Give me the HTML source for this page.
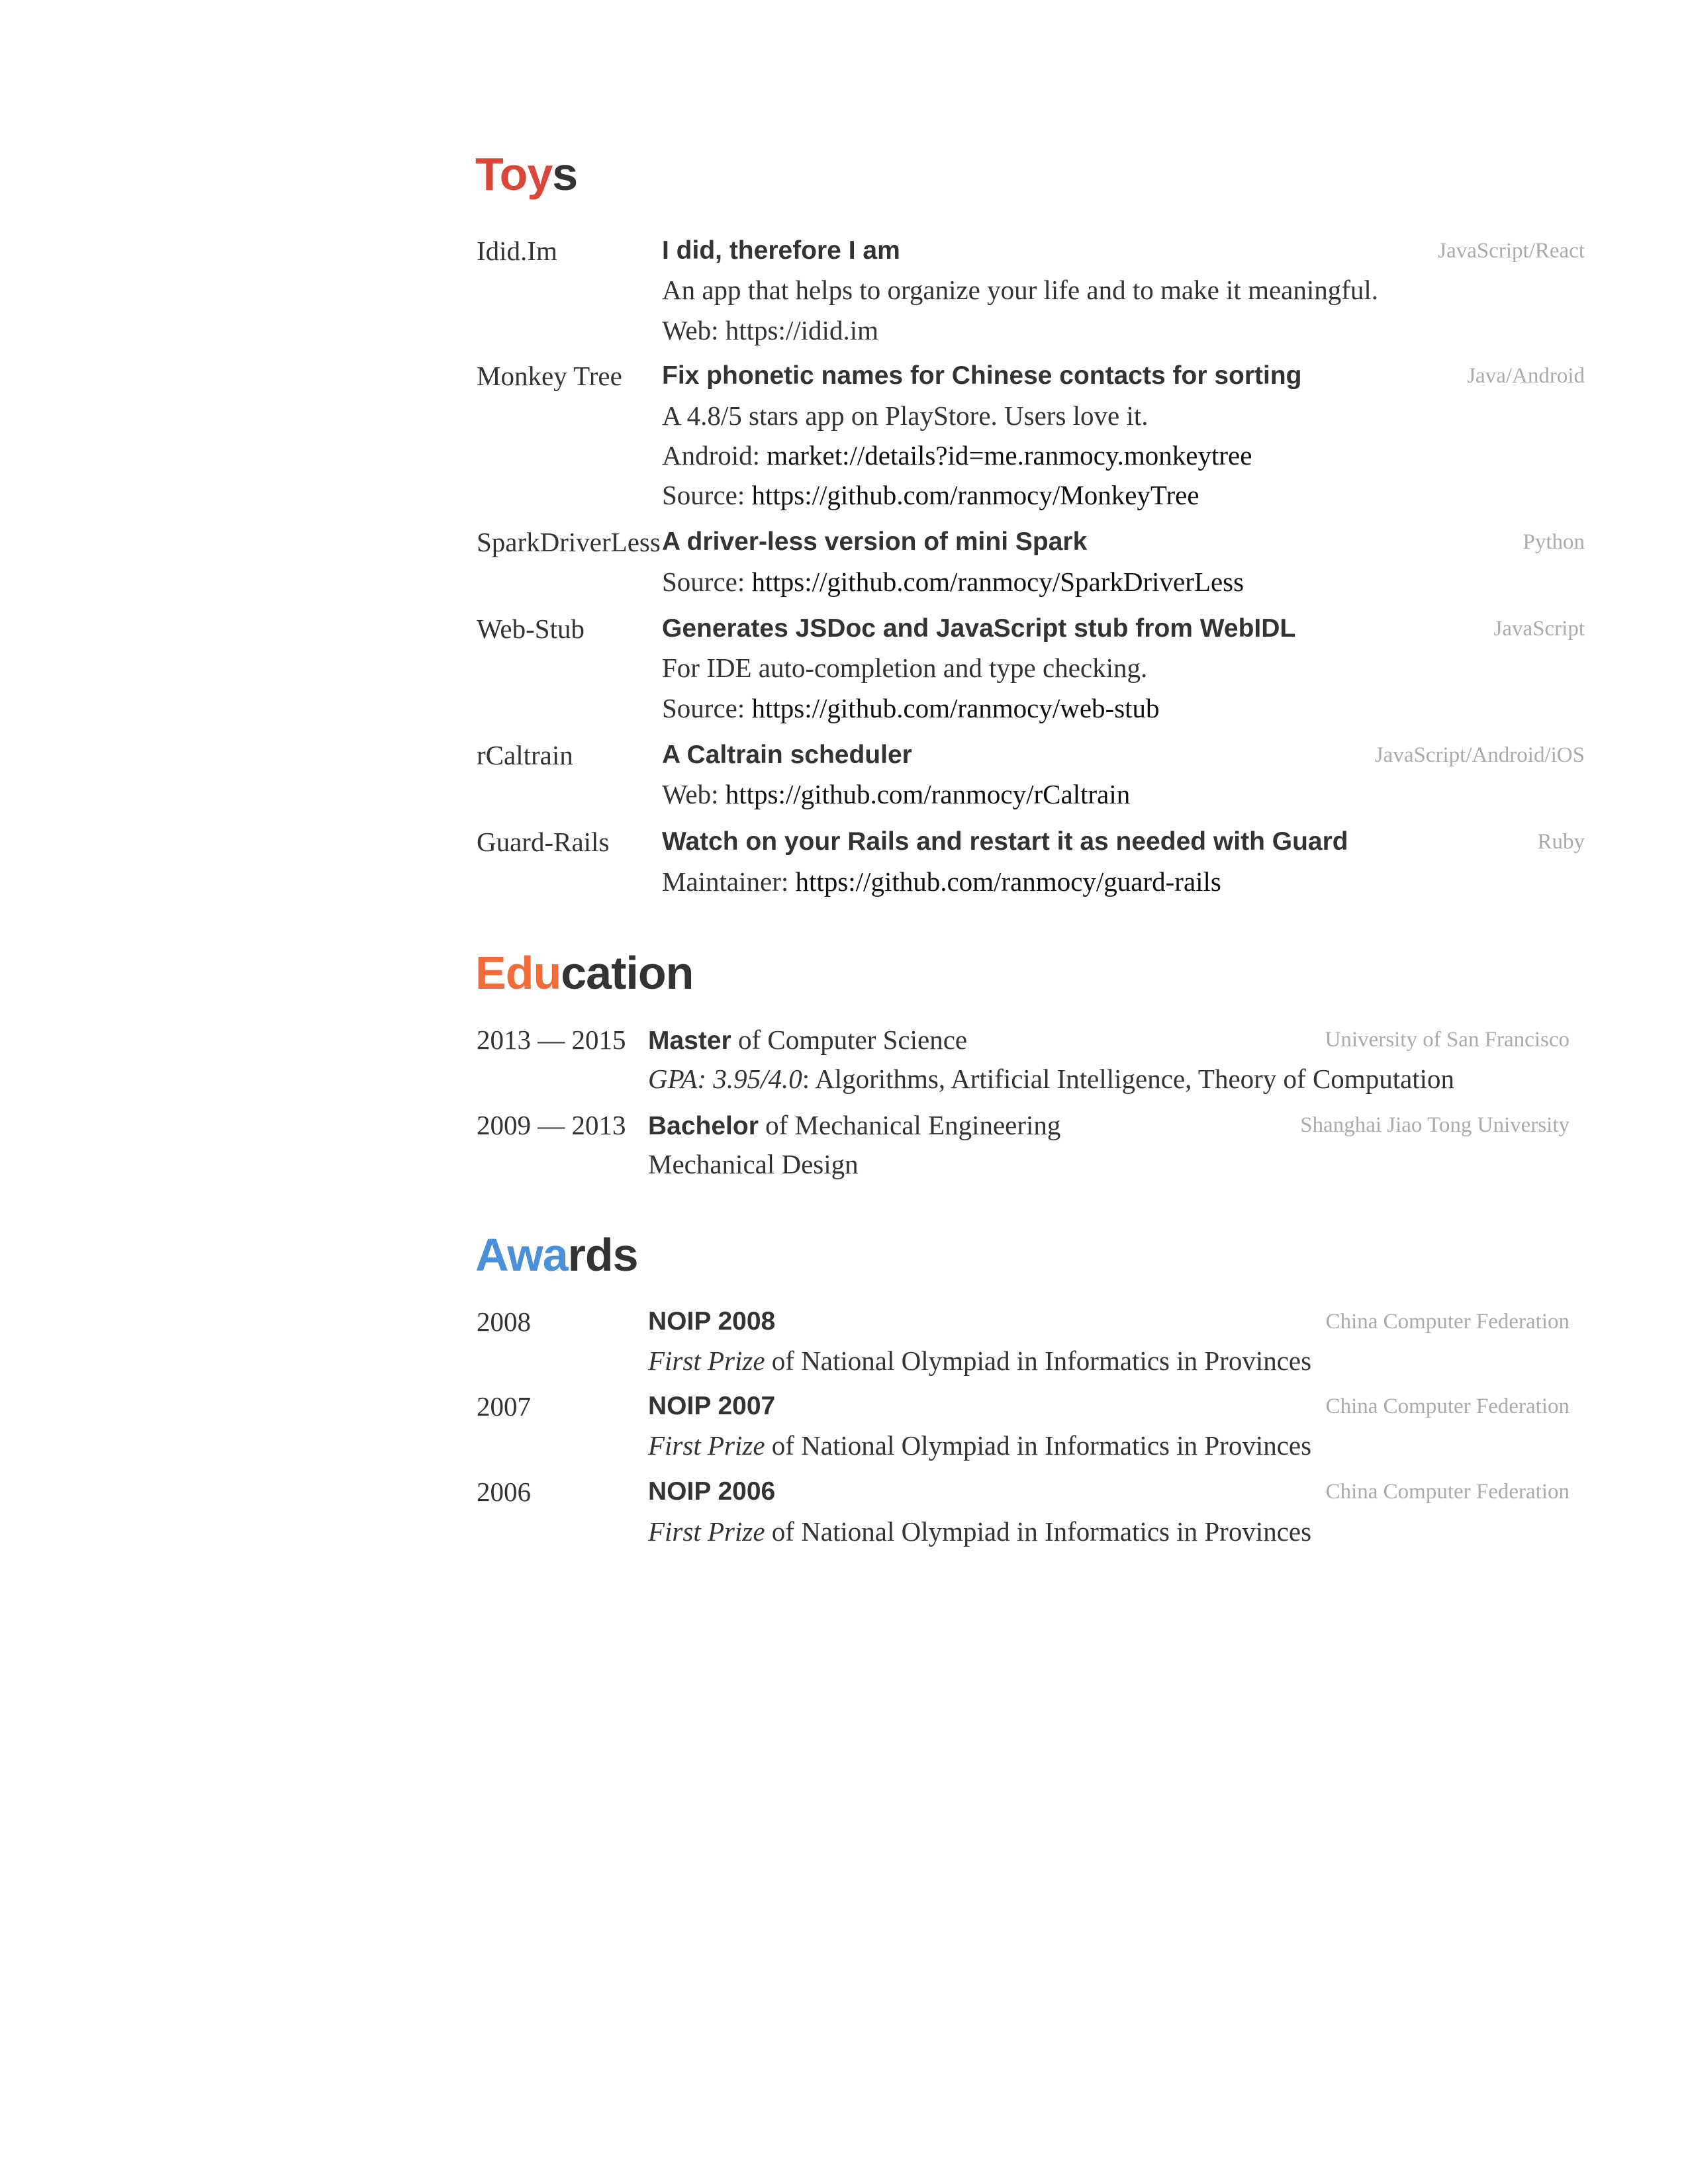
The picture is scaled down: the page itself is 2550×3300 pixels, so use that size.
<!DOCTYPE html>
<html><head><meta charset="utf-8"><style>
html,body{margin:0;padding:0;background:#fff;}
body{width:2550px;height:3300px;position:relative;overflow:hidden;font-family:"Liberation Serif",serif;color:#333;}
.l{position:absolute;height:50px;line-height:50px;font-size:41px;white-space:nowrap;}
.h{position:absolute;height:90px;line-height:90px;font-size:70px;font-weight:bold;font-family:"Liberation Sans",sans-serif;color:#333;left:718px;letter-spacing:-1px;}
.b{font-family:"Liberation Sans",sans-serif;font-weight:bold;font-size:39px;color:#333;}
.t{position:absolute;height:50px;line-height:50px;font-size:33px;color:#aaa;white-space:nowrap;text-align:right;}
.u{color:#111;}
</style></head><body>
<div class="h" style="top:218px"><span style="color:#d9473a">Toy</span>s</div>

<div class="l" style="left:720px;top:354px">Idid.Im</div>
<div class="l b" style="left:1000px;top:354px">I did, therefore I am</div>
<div class="t" style="right:156px;top:354px">JavaScript/React</div>
<div class="l" style="left:1000px;top:413px">An app that helps to organize your life and to make it meaningful.</div>
<div class="l" style="left:1000px;top:474px">Web: https://idid.im</div>

<div class="l" style="left:720px;top:543px">Monkey Tree</div>
<div class="l b" style="left:1000px;top:543px">Fix phonetic names for Chinese contacts for sorting</div>
<div class="t" style="right:156px;top:543px">Java/Android</div>
<div class="l" style="left:1000px;top:603px">A 4.8/5 stars app on PlayStore. Users love it.</div>
<div class="l" style="left:1000px;top:663px">Android: <span class="u">market://details?id=me.ranmocy.monkeytree</span></div>
<div class="l" style="left:1000px;top:723px">Source: <span class="u">https://github.com/ranmocy/MonkeyTree</span></div>

<div class="l" style="left:720px;top:794px">SparkDriverLess</div>
<div class="l b" style="left:1000px;top:794px">A driver-less version of mini Spark</div>
<div class="t" style="right:156px;top:794px">Python</div>
<div class="l" style="left:1000px;top:854px">Source: <span class="u">https://github.com/ranmocy/SparkDriverLess</span></div>

<div class="l" style="left:720px;top:925px">Web-Stub</div>
<div class="l b" style="left:1000px;top:925px">Generates JSDoc and JavaScript stub from WebIDL</div>
<div class="t" style="right:156px;top:925px">JavaScript</div>
<div class="l" style="left:1000px;top:984px">For IDE auto-completion and type checking.</div>
<div class="l" style="left:1000px;top:1045px">Source: <span class="u">https://github.com/ranmocy/web-stub</span></div>

<div class="l" style="left:720px;top:1116px">rCaltrain</div>
<div class="l b" style="left:1000px;top:1116px">A Caltrain scheduler</div>
<div class="t" style="right:156px;top:1116px">JavaScript/Android/iOS</div>
<div class="l" style="left:1000px;top:1175px">Web: <span class="u">https://github.com/ranmocy/rCaltrain</span></div>

<div class="l" style="left:720px;top:1247px">Guard-Rails</div>
<div class="l b" style="left:1000px;top:1247px">Watch on your Rails and restart it as needed with Guard</div>
<div class="t" style="right:156px;top:1247px">Ruby</div>
<div class="l" style="left:1000px;top:1307px">Maintainer: <span class="u">https://github.com/ranmocy/guard-rails</span></div>

<div class="h" style="top:1425px"><span style="color:#f26b3a">Edu</span>cation</div>

<div class="l" style="left:720px;top:1546px">2013 — 2015</div>
<div class="l" style="left:979px;top:1546px"><span class="b">Master</span> of Computer Science</div>
<div class="t" style="right:179px;top:1546px">University of San Francisco</div>
<div class="l" style="left:979px;top:1605px"><i>GPA: 3.95/4.0</i>: Algorithms, Artificial Intelligence, Theory of Computation</div>

<div class="l" style="left:720px;top:1675px">2009 — 2013</div>
<div class="l" style="left:979px;top:1675px"><span class="b">Bachelor</span> of Mechanical Engineering</div>
<div class="t" style="right:179px;top:1675px">Shanghai Jiao Tong University</div>
<div class="l" style="left:979px;top:1734px">Mechanical Design</div>

<div class="h" style="top:1851px"><span style="color:#4a90d9">Awa</span>rds</div>

<div class="l" style="left:720px;top:1972px">2008</div>
<div class="l b" style="left:979px;top:1972px">NOIP 2008</div>
<div class="t" style="right:179px;top:1972px">China Computer Federation</div>
<div class="l" style="left:979px;top:2031px"><i>First Prize</i> of National Olympiad in Informatics in Provinces</div>

<div class="l" style="left:720px;top:2100px">2007</div>
<div class="l b" style="left:979px;top:2100px">NOIP 2007</div>
<div class="t" style="right:179px;top:2100px">China Computer Federation</div>
<div class="l" style="left:979px;top:2159px"><i>First Prize</i> of National Olympiad in Informatics in Provinces</div>

<div class="l" style="left:720px;top:2229px">2006</div>
<div class="l b" style="left:979px;top:2229px">NOIP 2006</div>
<div class="t" style="right:179px;top:2229px">China Computer Federation</div>
<div class="l" style="left:979px;top:2289px"><i>First Prize</i> of National Olympiad in Informatics in Provinces</div>
</body></html>
